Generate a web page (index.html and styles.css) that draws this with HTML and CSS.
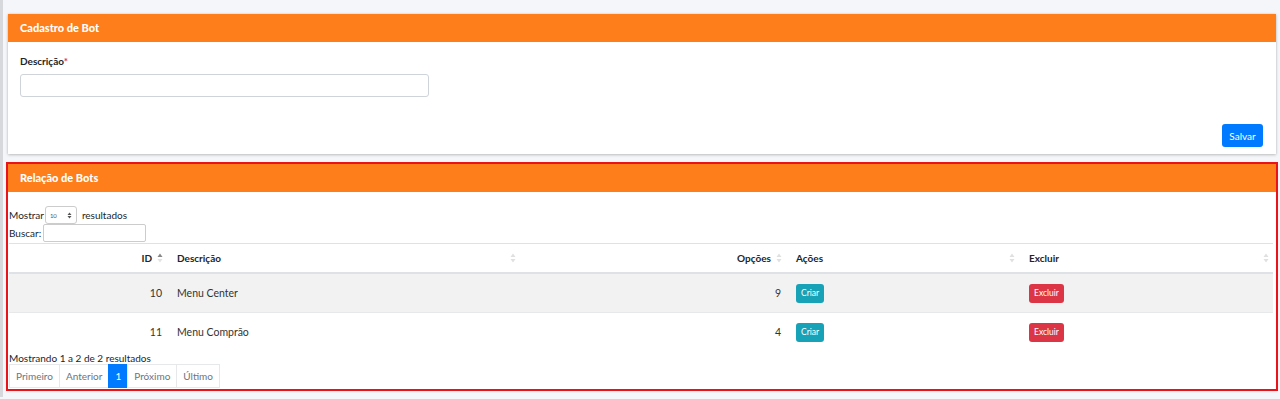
FILE: index.html
```html
<!DOCTYPE html>
<html>
<head>
  <title>Bots</title>
  <link rel="stylesheet" href="styles.css">
</head>
<body>
  <div class="content">
    <div class="card">
      <div class="card-header">Cadastro de Bot</div>
      <div class="card-body form-body">
        <label class="field-label">Descrição<span class="req">*</span></label>
        <input class="text-input" type="text">
        <div class="form-actions">
          <button class="btn btn-primary">Salvar</button>
        </div>
      </div>
    </div>

    <div class="card card-marked">
      <div class="card-header">Relação de Bots</div>
      <div class="card-body list-body">
        <div class="dt-length">
          Mostrar
          <span class="dt-select">10 <svg width="5" height="7" viewBox="0 0 5 7"><path d="M0.5 3 L2.5 0.5 L4.5 3 Z M0.5 4 L2.5 6.5 L4.5 4 Z" fill="#555"/></svg></span>
          resultados
        </div>
        <div class="dt-filter">Buscar: <input class="search-input" type="text"></div>

        <table class="dt-table">
          <colgroup>
            <col style="width: 158px">
            <col style="width: 353px">
            <col style="width: 266px">
            <col style="width: 233px">
            <col style="width: 254px">
          </colgroup>
          <thead>
            <tr>
              <th><div class="th-in right">ID <svg class="sort" width="6" height="10" viewBox="0 0 6 10"><path d="M0.5 4 L3 0.5 L5.5 4 Z" fill="#888"/><path d="M0.5 6 L3 9.5 L5.5 6 Z" fill="#e3e3e3"/></svg></div></th>
              <th><div class="th-in left">Descrição <svg class="sort" width="6" height="10" viewBox="0 0 6 10"><path d="M0.5 4 L3 0.5 L5.5 4 Z M0.5 6 L3 9.5 L5.5 6 Z" fill="#e0e0e0"/></svg></div></th>
              <th><div class="th-in right">Opções <svg class="sort" width="6" height="10" viewBox="0 0 6 10"><path d="M0.5 4 L3 0.5 L5.5 4 Z M0.5 6 L3 9.5 L5.5 6 Z" fill="#e0e0e0"/></svg></div></th>
              <th><div class="th-in left">Ações <svg class="sort" width="6" height="10" viewBox="0 0 6 10"><path d="M0.5 4 L3 0.5 L5.5 4 Z M0.5 6 L3 9.5 L5.5 6 Z" fill="#e0e0e0"/></svg></div></th>
              <th><div class="th-in left">Excluir <svg class="sort" width="6" height="10" viewBox="0 0 6 10"><path d="M0.5 4 L3 0.5 L5.5 4 Z M0.5 6 L3 9.5 L5.5 6 Z" fill="#e0e0e0"/></svg></div></th>
            </tr>
          </thead>
          <tbody>
            <tr class="odd">
              <td class="num">10</td>
              <td>Menu Center</td>
              <td class="num">9</td>
              <td><button class="btn btn-sm btn-info">Criar</button></td>
              <td><button class="btn btn-sm btn-danger">Excluir</button></td>
            </tr>
            <tr>
              <td class="num">11</td>
              <td>Menu Comprão</td>
              <td class="num">4</td>
              <td><button class="btn btn-sm btn-info">Criar</button></td>
              <td><button class="btn btn-sm btn-danger">Excluir</button></td>
            </tr>
          </tbody>
        </table>

        <div class="dt-info">Mostrando 1 a 2 de 2 resultados</div>
        <ul class="pagination">
          <li>Primeiro</li>
          <li>Anterior</li>
          <li class="active">1</li>
          <li>Próximo</li>
          <li>Último</li>
        </ul>
      </div>
    </div>
  </div>
</body>
</html>
```

FILE: styles.css
```css
body {
  margin: 0;
  background: #f4f6f9;
  font-family: 'Lato', 'Noto Sans', sans-serif;
  font-size: 10px;
  color: #212529;
}

.content {
  border-left: 3px solid #d6d8db;
  padding: 14px 4px 8px 5px;
}

.card {
  background: #fff;
  box-shadow: 0 0 2px rgba(0,0,0,.12), 0 1px 3px rgba(0,0,0,.2);
}

.card-header {
  background: #fd7e1a;
  color: #fff;
  font-weight: 900;
  font-size: 11px;
  height: 28px;
  line-height: 28px;
  padding-left: 12px;
}

.form-body {
  padding: 13px 13px 7px 12px;
  display: flex;
  flex-direction: column;
}

.field-label {
  font-weight: bold;
  font-size: 10px;
  line-height: 12px;
}

.req {
  color: #dc3545;
}

.text-input {
  margin-top: 7px;
  width: 407px;
  height: 21px;
  border: 1px solid #ced4da;
  border-radius: 3px;
  padding: 0;
  box-sizing: content-box;
}

.form-actions {
  display: flex;
  justify-content: flex-end;
  margin-top: 27px;
}

.btn {
  font-family: inherit;
  border: none;
  border-radius: 3px;
  color: #fff;
  cursor: pointer;
}

.btn-primary {
  background: #007bff;
  font-size: 10px;
  width: 41px;
  height: 23px;
  padding: 0;
}

.card-marked {
  margin-top: 10px;
  outline: 2px solid #e8141a;
}

.list-body {
  padding: 14px 2px 1px 1px;
}

.dt-length {
  display: flex;
  align-items: center;
  gap: 1px;
  height: 18px;
}

.dt-select {
  display: inline-flex;
  align-items: center;
  justify-content: space-between;
  width: 22px;
  height: 16px;
  padding: 0 4px;
  margin-right: 4px;
  border: 1px solid #ccc;
  border-radius: 3px;
  font-size: 6px;
  color: #555;
}

.dt-filter {
  display: flex;
  align-items: center;
  gap: 2px;
  height: 18px;
}

.search-input {
  width: 101px;
  height: 16px;
  padding: 0;
  border: 1px solid #ccc;
  border-radius: 2px;
}

.dt-table {
  border-collapse: collapse;
  table-layout: fixed;
  width: 1264px;
  margin-top: 1px;
}

.dt-table th {
  font-weight: bold;
  font-size: 10px;
  height: 28px;
  border-top: 1px solid #dee2e6;
  border-bottom: 2px solid #dee2e6;
  padding: 0 4px 0 10px;
}

.th-in {
  display: flex;
  align-items: center;
}

.th-in.right {
  justify-content: flex-end;
  gap: 5px;
}

.th-in.left {
  justify-content: space-between;
}

.dt-table td {
  height: 38px;
  padding: 0 5px 0 10px;
  border-top: 1px solid #e6e8ea;
  color: #333;
  font-size: 10.5px;
}

.dt-table tr.odd td {
  background: #f2f2f2;
}

.dt-table td.num {
  text-align: right;
}

.btn-sm {
  font-size: 8.5px;
  height: 19px;
  padding: 0 5px;
}

.btn-info {
  background: #17a2b8;
}

.btn-danger {
  background: #dc3545;
}

.dt-info {
  margin-top: 1px;
  line-height: 12px;
}

.pagination {
  display: flex;
  list-style: none;
  margin: 0;
  padding: 0;
}

.pagination li {
  height: 22px;
  line-height: 22px;
  padding: 0 6px;
  border: 1px solid #e6e8ea;
  margin-left: -1px;
  color: #6c757d;
}

.pagination li:first-child {
  margin-left: 0;
}

.pagination li.active {
  background: #007bff;
  border-color: #007bff;
  color: #fff;
}
```
